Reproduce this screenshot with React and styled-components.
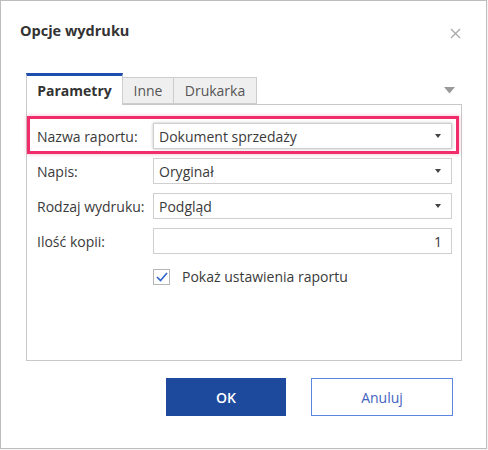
import React from 'react'
import styled, { createGlobalStyle } from 'styled-components'

const GlobalStyle = createGlobalStyle`
  html, body {
    margin: 0;
    padding: 0;
    background: #f4f4f4;
  }
  body {
    font-family: "Open Sans", "Noto Sans", sans-serif;
    font-size: 14px;
    color: #3a3a3a;
  }
  * { box-sizing: border-box; }
`

const Dialog = styled.div`
  width: 487px;
  height: 449px;
  background: #fff;
  border: 1px solid #bdbdbd;
  display: flex;
  flex-direction: column;
`

const Header = styled.div`
  height: 71px;
  display: flex;
  justify-content: space-between;
  align-items: flex-start;
  padding: 20px 25px 0 19px;
`

const Title = styled.div`
  font-weight: 700;
  font-size: 14.5px;
  color: #333;
`

const Close = styled.div`
  margin-top: 7px;
  width: 11px;
  height: 11px;
  display: flex;
`

const TabArea = styled.div`
  margin-left: 25px;
  width: 436px;
  display: flex;
  flex-direction: column;
`

const TabStrip = styled.div`
  height: 32px;
  display: flex;
  align-items: flex-end;
  position: relative;
  z-index: 1;
`

const Tab = styled.div`
  height: ${p => (p.active ? '32px' : '27px')};
  display: flex;
  align-items: center;
  justify-content: center;
  padding-bottom: ${p => (p.active ? '0' : '1px')};
  border: 1px solid #cdcdcd;
  border-left-width: ${p => (p.first ? '1px' : '0')};
  border-top: ${p => (p.active ? '3px solid #1f4fae' : '1px solid #cdcdcd')};
  border-bottom: ${p => (p.active ? 'none' : '1px solid #cdcdcd')};
  background: ${p => (p.active ? '#fff' : '#efefef')};
  font-weight: ${p => (p.active ? 700 : 400)};
  color: ${p => (p.active ? '#333' : '#555')};
  margin-bottom: ${p => (p.active ? '-1px' : '0')};
  width: ${p => p.w}px;
`

const Spacer = styled.div`
  flex: 1;
`

const PanelMenu = styled.div`
  align-self: center;
  margin: 4px 7px 0 0;
  display: flex;
`

const Panel = styled.div`
  height: 257px;
  border: 1px solid #c8c8c8;
  padding: 18px 8px 0 10px;
  display: flex;
  flex-direction: column;
  gap: 9px;
`

const Row = styled.div`
  display: flex;
  align-items: center;
  height: 26px;
  position: relative;

  ${p => p.marked && `
    &::after {
      content: '';
      position: absolute;
      left: -10px;
      top: -7px;
      right: -6px;
      bottom: -5px;
      border: 3px solid #f02c6a;
      box-shadow: 0 0 4px rgba(240, 44, 106, 0.35);
      pointer-events: none;
    }
  `}
`

const Label = styled.div`
  width: 116px;
  flex-shrink: 0;
  white-space: nowrap;
`

const Field = styled.div`
  width: 299px;
  height: 26px;
  border: 1px solid #cfcfcf;
  display: flex;
  align-items: center;
  justify-content: ${p => (p.right ? 'flex-end' : 'space-between')};
  padding: 0 9px 0 5px;
  background: #fff;
  box-shadow: ${p => (p.marked ? '0 0 3px rgba(0,0,0,0.25)' : 'none')};
`

const Caret = styled.div`
  width: 0;
  height: 0;
  border-left: 3.5px solid transparent;
  border-right: 3.5px solid transparent;
  border-top: 4px solid #444;
  margin-right: 1px;
`

const CheckRow = styled.div`
  display: flex;
  align-items: center;
  margin-left: 116px;
  margin-top: 4px;
  gap: 12px;
`

const Box = styled.div`
  width: 17px;
  height: 16px;
  border: 1px solid #b5b5b5;
  display: flex;
  align-items: center;
  justify-content: center;
  background: #fff;
`

const Footer = styled.div`
  display: flex;
  padding: 17px 0 0 165px;
  gap: 25px;
`

const Button = styled.div`
  width: ${p => p.w}px;
  height: 38px;
  display: flex;
  align-items: center;
  justify-content: center;
  font-size: 14px;
  font-weight: ${p => (p.primary ? 600 : 400)};
  background: ${p => (p.primary ? '#1e4a9d' : '#fff')};
  color: ${p => (p.primary ? '#fff' : '#4363c2')};
  border: 1px solid ${p => (p.primary ? '#1e4a9d' : '#5a86dd')};
`

const fields = [
  { label: 'Nazwa raportu:', value: 'Dokument sprzedaży', marked: true },
  { label: 'Napis:', value: 'Oryginał' },
  { label: 'Rodzaj wydruku:', value: 'Podgląd' },
]

const App = () => (
  <>
    <GlobalStyle />
    <Dialog>
      <Header>
        <Title>Opcje wydruku</Title>
        <Close>
          <svg width="11" height="11" viewBox="0 0 11 11">
            <path d="M1 1L10 10M10 1L1 10" stroke="#a8a8a8" strokeWidth="1.3" />
          </svg>
        </Close>
      </Header>
      <TabArea>
        <TabStrip>
          <Tab active first w={97}>Parametry</Tab>
          <Tab w={51}>Inne</Tab>
          <Tab w={83}>Drukarka</Tab>
          <Spacer />
          <PanelMenu>
            <svg width="11" height="7" viewBox="0 0 11 7">
              <path d="M0 0H11L5.5 6.5Z" fill="#9a9a9a" />
            </svg>
          </PanelMenu>
        </TabStrip>
        <Panel>
          {fields.map(f => (
            <Row key={f.label} marked={f.marked}>
              <Label>{f.label}</Label>
              <Field marked={f.marked}>
                <span>{f.value}</span>
                <Caret />
              </Field>
            </Row>
          ))}
          <Row>
            <Label>Ilość kopii:</Label>
            <Field right>
              <span>1</span>
            </Field>
          </Row>
          <CheckRow>
            <Box>
              <svg width="12" height="10" viewBox="0 0 12 10">
                <path d="M1 5L4.5 8.5L11 1" stroke="#2d63c8" strokeWidth="1.6" fill="none" />
              </svg>
            </Box>
            <span>Pokaż ustawienia raportu</span>
          </CheckRow>
        </Panel>
      </TabArea>
      <Footer>
        <Button primary w={120}>OK</Button>
        <Button w={142}>Anuluj</Button>
      </Footer>
    </Dialog>
  </>
)

export default App
